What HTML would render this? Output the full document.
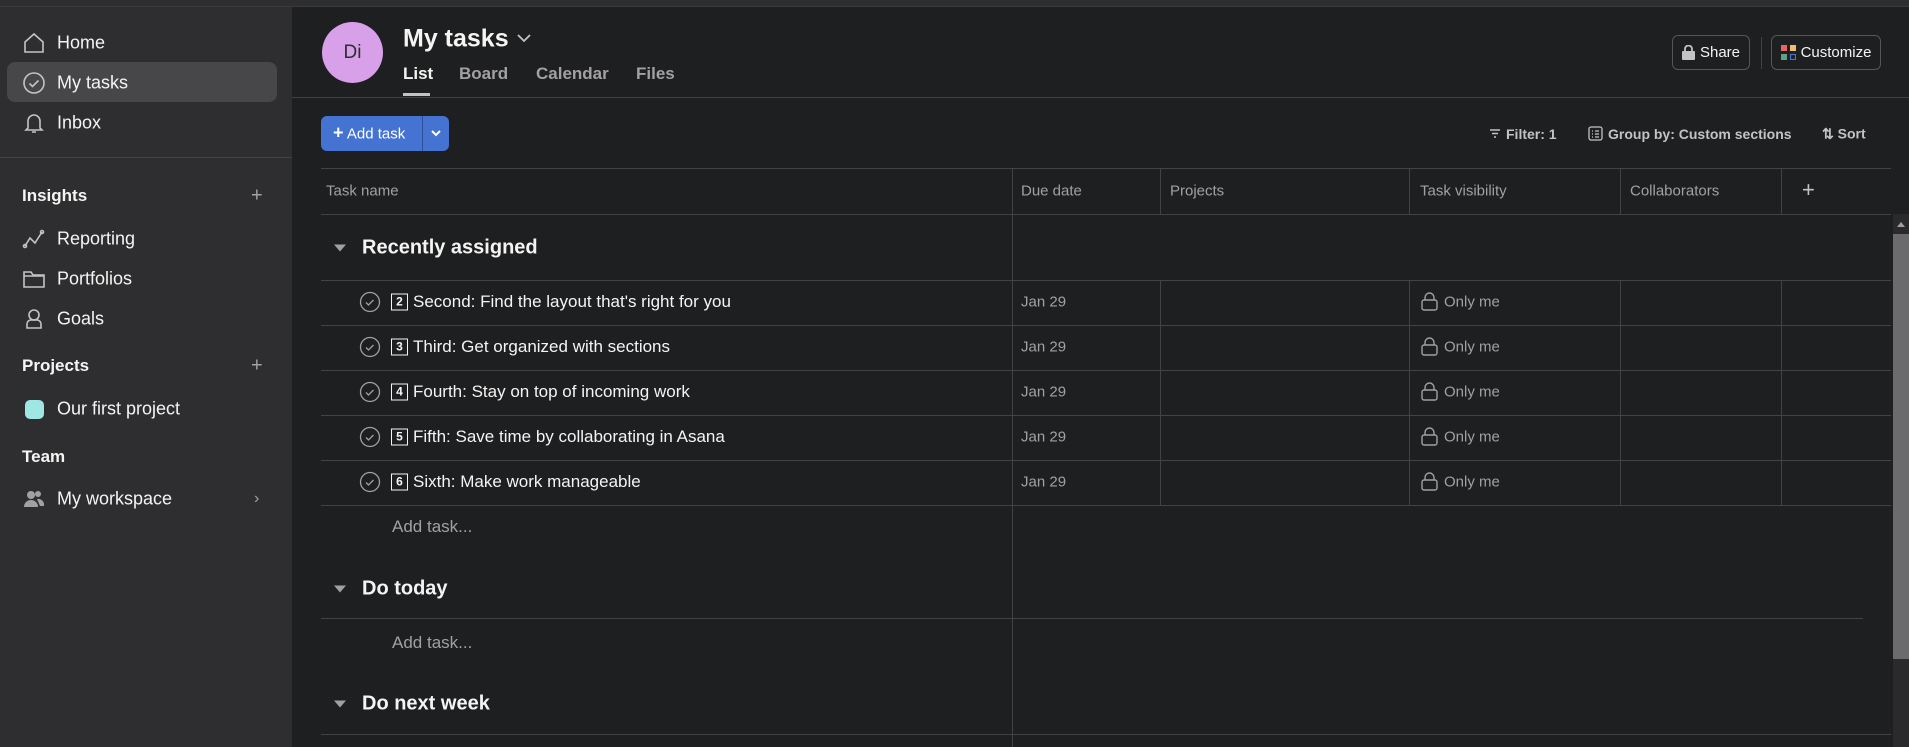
<!DOCTYPE html>
<html><head><meta charset="utf-8"><style>
*{box-sizing:border-box;margin:0;padding:0}
body{width:1909px;height:747px;overflow:hidden;background:#1e1f21;font-family:"Liberation Sans",sans-serif;color:#f5f4f3;position:relative}
.a{position:absolute}
.top{left:0;top:0;width:1909px;height:7px;background:#2e2e30;border-bottom:1px solid #3a3a3c}
.side{left:0;top:7px;width:292px;height:740px;background:#2e2e30}
.si{position:absolute;left:57px;font-size:18px;color:#f5f4f3;transform:translateY(-50%)}
.sh{position:absolute;left:22px;font-size:17px;font-weight:bold;transform:translateY(-50%)}
.ic{position:absolute;left:22px;transform:translateY(-50%)}
.hl{position:absolute;left:7px;top:55px;width:270px;height:40px;background:#47474a;border-radius:8px}
.plus{position:absolute;left:251px;font-size:20px;color:#a2a0a2;transform:translateY(-50%)}
.hline{position:absolute;height:1px;background:#424244}
.vline{position:absolute;width:1px;background:#424244}
.t{position:absolute;transform:translateY(-50%);white-space:nowrap}
.task{font-size:17px;color:#f5f4f3;left:413px}
.num{position:absolute;left:391px;width:17px;height:17px;border:1.5px solid #f5f4f3;font-size:12px;font-weight:bold;text-align:center;line-height:14px;transform:translateY(-50%)}
.chk{position:absolute;left:359px;transform:translateY(-50%)}
.date{left:1021px;font-size:15px;color:#a2a0a2}
.vis{left:1422px;font-size:15px;color:#a2a0a2}
.col{font-size:15px;color:#a2a0a2}
.sec{left:362px;font-size:20px;font-weight:bold}
.tri{position:absolute;left:334px;width:0;height:0;border-left:6px solid transparent;border-right:6px solid transparent;border-top:7px solid #a2a0a2;transform:translateY(-50%)}
.addt{left:392px;font-size:17px;color:#a2a0a2}
.btn{position:absolute;border:1px solid #565557;border-radius:6px;font-size:15px;display:flex;align-items:center;justify-content:center;gap:5px}
.tool{font-size:14px;color:#c4c3c4;font-weight:bold}
</style></head><body>
<div class="a top"></div>
<div class="a side"></div>
<div class="hl" style="top:62px"></div>
<svg class="ic" style="top:43px" width="24" height="24" viewBox="0 0 24 24" fill="none" stroke="#c4c3c4" stroke-width="1.6"><path d="M3 11 12 3l9 8v10H3z"/></svg>
<div class="si" style="top:43px">Home</div>
<svg class="ic" style="top:83px" width="24" height="24" viewBox="0 0 24 24" fill="none" stroke="#c4c3c4" stroke-width="1.6"><circle cx="12" cy="12" r="10"/><path d="M7.5 12.5l3 3 6-6"/></svg>
<div class="si" style="top:83px">My tasks</div>
<svg class="ic" style="top:123px" width="24" height="24" viewBox="0 0 24 24" fill="none" stroke="#c4c3c4" stroke-width="1.6"><path d="M6 17V10a6 6 0 0 1 12 0v7l2 2H4zM10 21h4"/></svg>
<div class="si" style="top:123px">Inbox</div>
<div class="hline" style="left:0;top:157px;width:292px"></div>
<div class="sh" style="top:196px">Insights</div><div class="plus" style="top:196px">+</div>
<svg class="ic" style="top:239px" width="24" height="24" viewBox="0 0 24 24" fill="none" stroke="#c4c3c4" stroke-width="1.6"><path d="M3 19l5-8 5 5 7-11"/><circle cx="3" cy="19" r="1.5"/><circle cx="20" cy="5" r="1.5"/></svg>
<div class="si" style="top:239px">Reporting</div>
<svg class="ic" style="top:279px" width="24" height="24" viewBox="0 0 24 24" fill="none" stroke="#c4c3c4" stroke-width="1.6"><path d="M2 5h7l2 3h11v12H2zM2 9h20"/></svg>
<div class="si" style="top:279px">Portfolios</div>
<svg class="ic" style="top:319px" width="24" height="24" viewBox="0 0 24 24" fill="none" stroke="#c4c3c4" stroke-width="1.6"><circle cx="12" cy="8" r="5"/><path d="M5 21v-4a4 4 0 0 1 4-4h6a4 4 0 0 1 4 4v4z"/></svg>
<div class="si" style="top:319px">Goals</div>
<div class="sh" style="top:366px">Projects</div><div class="plus" style="top:366px">+</div>
<div class="a" style="left:25px;top:400px;width:19px;height:19px;border-radius:5px;background:#9ee7e3"></div>
<div class="si" style="top:409px">Our first project</div>
<div class="sh" style="top:457px">Team</div>
<svg class="ic" style="top:499px" width="24" height="24" viewBox="0 0 24 24" fill="#a2a0a2"><circle cx="9" cy="8" r="4"/><path d="M2 20a7 7 0 0 1 14 0z"/><circle cx="16" cy="7" r="3"/><path d="M15 12a6 6 0 0 1 7 7h-4z"/></svg>
<div class="si" style="top:499px">My workspace</div>
<div class="t" style="left:254px;top:499px;font-size:16px;color:#a2a0a2">›</div>

<div class="a" style="left:322px;top:22px;width:61px;height:61px;border-radius:50%;background:#d8a0e8;color:#2e2e30;font-size:19px;display:flex;align-items:center;justify-content:center">Di</div>
<div class="t" style="left:403px;top:39px;font-size:25px;font-weight:bold">My tasks</div>
<svg class="a" style="left:516px;top:32px" width="16" height="12" viewBox="0 0 16 12" fill="none" stroke="#c4c3c4" stroke-width="1.8"><path d="M2 3l6 6 6-6"/></svg>
<div class="t" style="left:403px;top:74px;font-size:17px;font-weight:bold">List</div>
<div class="a" style="left:403px;top:93px;width:27px;height:3px;background:#c4c3c4"></div>
<div class="t" style="left:459px;top:74px;font-size:17px;color:#a2a0a2;font-weight:bold">Board</div>
<div class="t" style="left:536px;top:74px;font-size:17px;color:#a2a0a2;font-weight:bold">Calendar</div>
<div class="t" style="left:636px;top:74px;font-size:17px;color:#a2a0a2;font-weight:bold">Files</div>
<div class="btn" style="left:1672px;top:35px;width:78px;height:35px"><svg width="13" height="15" viewBox="0 0 13 15" fill="#c4c3c4"><rect x="0" y="6" width="13" height="9" rx="1"/><path d="M3 6V4a3.5 3.5 0 0 1 7 0v2" fill="none" stroke="#c4c3c4" stroke-width="1.8"/></svg>Share</div>
<div class="vline" style="left:1761px;top:37px;height:32px"></div>
<div class="btn" style="left:1771px;top:35px;width:110px;height:35px"><svg width="15" height="15" viewBox="0 0 15 15"><rect x="0" y="0" width="6" height="6" fill="#e8646d"/><rect x="9" y="0" width="6" height="6" fill="#f1bd6c"/><rect x="0" y="9" width="6" height="6" fill="#5da283"/><rect x="9.5" y="9.5" width="5" height="5" fill="none" stroke="#4573d2" stroke-width="1.2"/></svg>Customize</div>
<div class="hline" style="left:292px;top:97px;width:1617px"></div>

<div class="a" style="left:321px;top:116px;width:128px;height:35px;background:#4573d2;border-radius:6px"></div>
<div class="a" style="left:422px;top:116px;width:1px;height:35px;background:#2c4e96"></div>
<div class="t" style="left:333px;top:133px;font-size:15px;color:#fff"><b style="font-size:18px">+</b> Add task</div>
<svg class="a" style="left:430px;top:128px" width="12" height="10" viewBox="0 0 12 10" fill="none" stroke="#fff" stroke-width="2"><path d="M2 3l4 4 4-4"/></svg>
<svg class="a" style="left:1489px;top:128px" width="12" height="11" viewBox="0 0 12 11" fill="none" stroke="#c4c3c4" stroke-width="1.4"><path d="M1 2h10M3 5.5h6M5 9h2"/></svg>
<div class="t tool" style="left:1506px;top:134px">Filter: 1</div>
<svg class="a" style="left:1588px;top:126px" width="15" height="15" viewBox="0 0 15 15" fill="none" stroke="#c4c3c4" stroke-width="1.3"><rect x="1" y="1" width="13" height="13" rx="2"/><path d="M4 5h1M7 5h4M4 8h1M7 8h4M4 11h1M7 11h4"/></svg>
<div class="t tool" style="left:1608px;top:134px">Group by: Custom sections</div>
<div class="t tool" style="left:1822px;top:134px">⇅ Sort</div>

<div class="hline" style="left:321px;top:168px;width:1570px"></div>
<div class="hline" style="left:321px;top:214px;width:1570px"></div>
<div class="t col" style="left:326px;top:191px">Task name</div>
<div class="t col" style="left:1021px;top:191px">Due date</div>
<div class="t col" style="left:1170px;top:191px">Projects</div>
<div class="t col" style="left:1420px;top:191px">Task visibility</div>
<div class="t col" style="left:1630px;top:191px">Collaborators</div>
<div class="t" style="left:1802px;top:190px;font-size:22px;color:#c4c3c4">+</div>
<div class="vline" style="left:1012px;top:168px;height:579px"></div>
<div class="vline" style="left:1160px;top:168px;height:46px"></div>
<div class="vline" style="left:1409px;top:168px;height:46px"></div>
<div class="vline" style="left:1620px;top:168px;height:46px"></div>
<div class="vline" style="left:1781px;top:168px;height:46px"></div>
<div class="vline" style="left:1160px;top:280px;height:225px"></div>
<div class="vline" style="left:1409px;top:280px;height:225px"></div>
<div class="vline" style="left:1620px;top:280px;height:225px"></div>
<div class="vline" style="left:1781px;top:280px;height:225px"></div>
<div class="a" style="left:1893px;top:214px;width:16px;height:533px;background:#2a2a2c"></div>
<div class="a" style="left:1893px;top:234px;width:16px;height:425px;background:#6b6b6d"></div>
<div class="a" style="left:1897px;top:222px;width:0;height:0;border-left:4px solid transparent;border-right:4px solid transparent;border-bottom:5px solid #a2a0a2"></div>

<div class="tri" style="top:248px"></div><div class="t sec" style="top:248px">Recently assigned</div>
<div class="hline" style="left:321px;top:280px;width:1570px"></div>
<div class="hline" style="left:321px;top:325px;width:1570px"></div>
<div class="hline" style="left:321px;top:370px;width:1570px"></div>
<div class="hline" style="left:321px;top:415px;width:1570px"></div>
<div class="hline" style="left:321px;top:460px;width:1570px"></div>
<div class="hline" style="left:321px;top:505px;width:1570px"></div>

<svg class="chk" style="top:302px" width="22" height="22" viewBox="0 0 22 22" fill="none" stroke="#a2a0a2" stroke-width="1.3"><circle cx="11" cy="11" r="9.5"/><path d="M7 11.5l2.5 2.5 5-5"/></svg>
<div class="num" style="top:302px">2</div><div class="t task" style="top:302px">Second: Find the layout that's right for you</div>
<div class="t date" style="top:302px">Jan 29</div>
<svg class="chk" style="top:347px" width="22" height="22" viewBox="0 0 22 22" fill="none" stroke="#a2a0a2" stroke-width="1.3"><circle cx="11" cy="11" r="9.5"/><path d="M7 11.5l2.5 2.5 5-5"/></svg>
<div class="num" style="top:347px">3</div><div class="t task" style="top:347px">Third: Get organized with sections</div>
<div class="t date" style="top:347px">Jan 29</div>
<svg class="chk" style="top:392px" width="22" height="22" viewBox="0 0 22 22" fill="none" stroke="#a2a0a2" stroke-width="1.3"><circle cx="11" cy="11" r="9.5"/><path d="M7 11.5l2.5 2.5 5-5"/></svg>
<div class="num" style="top:392px">4</div><div class="t task" style="top:392px">Fourth: Stay on top of incoming work</div>
<div class="t date" style="top:392px">Jan 29</div>
<svg class="chk" style="top:437px" width="22" height="22" viewBox="0 0 22 22" fill="none" stroke="#a2a0a2" stroke-width="1.3"><circle cx="11" cy="11" r="9.5"/><path d="M7 11.5l2.5 2.5 5-5"/></svg>
<div class="num" style="top:437px">5</div><div class="t task" style="top:437px">Fifth: Save time by collaborating in Asana</div>
<div class="t date" style="top:437px">Jan 29</div>
<svg class="chk" style="top:482px" width="22" height="22" viewBox="0 0 22 22" fill="none" stroke="#a2a0a2" stroke-width="1.3"><circle cx="11" cy="11" r="9.5"/><path d="M7 11.5l2.5 2.5 5-5"/></svg>
<div class="num" style="top:482px">6</div><div class="t task" style="top:482px">Sixth: Make work manageable</div>
<div class="t date" style="top:482px">Jan 29</div>

<svg class="a" style="left:1421px;top:292px" width="17" height="19" viewBox="0 0 17 19" fill="none" stroke="#a2a0a2" stroke-width="1.4"><rect x="1" y="8" width="15" height="10" rx="2"/><path d="M4 8V5.5a4.5 4.5 0 0 1 9 0V8"/></svg><div class="t vis" style="left:1444px;top:302px">Only me</div>
<svg class="a" style="left:1421px;top:337px" width="17" height="19" viewBox="0 0 17 19" fill="none" stroke="#a2a0a2" stroke-width="1.4"><rect x="1" y="8" width="15" height="10" rx="2"/><path d="M4 8V5.5a4.5 4.5 0 0 1 9 0V8"/></svg><div class="t vis" style="left:1444px;top:347px">Only me</div>
<svg class="a" style="left:1421px;top:382px" width="17" height="19" viewBox="0 0 17 19" fill="none" stroke="#a2a0a2" stroke-width="1.4"><rect x="1" y="8" width="15" height="10" rx="2"/><path d="M4 8V5.5a4.5 4.5 0 0 1 9 0V8"/></svg><div class="t vis" style="left:1444px;top:392px">Only me</div>
<svg class="a" style="left:1421px;top:427px" width="17" height="19" viewBox="0 0 17 19" fill="none" stroke="#a2a0a2" stroke-width="1.4"><rect x="1" y="8" width="15" height="10" rx="2"/><path d="M4 8V5.5a4.5 4.5 0 0 1 9 0V8"/></svg><div class="t vis" style="left:1444px;top:437px">Only me</div>
<svg class="a" style="left:1421px;top:472px" width="17" height="19" viewBox="0 0 17 19" fill="none" stroke="#a2a0a2" stroke-width="1.4"><rect x="1" y="8" width="15" height="10" rx="2"/><path d="M4 8V5.5a4.5 4.5 0 0 1 9 0V8"/></svg><div class="t vis" style="left:1444px;top:482px">Only me</div>

<div class="t addt" style="top:527px">Add task...</div>
<div class="tri" style="top:589px"></div><div class="t sec" style="top:589px">Do today</div>
<div class="hline" style="left:321px;top:618px;width:1542px"></div>
<div class="t addt" style="top:643px">Add task...</div>
<div class="tri" style="top:704px"></div><div class="t sec" style="top:704px">Do next week</div>
<div class="hline" style="left:321px;top:734px;width:1570px"></div>
</body></html>
